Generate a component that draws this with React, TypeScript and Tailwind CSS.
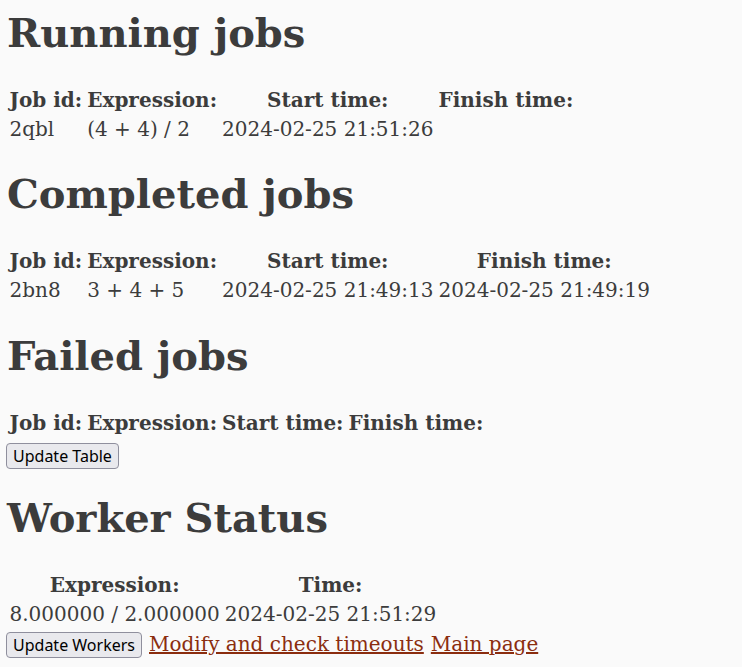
const running = [{ id: "2qbl", expr: "(4 + 4) / 2", start: "2024-02-25 21:51:26", finish: "" }];
const completed = [{ id: "2bn8", expr: "3 + 4 + 5", start: "2024-02-25 21:49:13", finish: "2024-02-25 21:49:19" }];
const workers = [{ expr: "8.000000 / 2.000000", time: "2024-02-25 21:51:29" }];

type Job = { id: string; expr: string; start: string; finish: string };

const th = "px-[1.5px] py-[1px] text-center font-bold";
const td = "px-[1.5px] py-[1px] text-left font-normal";
const btn =
  "h-[26px] rounded-[4px] border border-[#8f8f9d] bg-[#e9e9ed] px-[6px] text-[16px] leading-none text-black font-['Noto_Sans','DejaVu_Sans',sans-serif]";
const link = "text-[#8b2d0f] underline";

function Heading({ children, className = "mt-[26.8px]" }: { children: React.ReactNode; className?: string }) {
  return <h1 className={`${className} mb-[28.5px] pl-px text-[40px] font-bold leading-[46.5px]`}>{children}</h1>;
}

function JobsTable({ rows }: { rows: Job[] }) {
  return (
    <table className="border-separate border-spacing-[2px] leading-[25px]">
      <thead>
        <tr>
          <th className={th}>Job id:</th>
          <th className={th}>Expression:</th>
          <th className={th}>Start time:</th>
          <th className={th}>Finish time:</th>
        </tr>
      </thead>
      <tbody>
        {rows.map((r) => (
          <tr key={r.id}>
            <td className={td}>{r.id}</td>
            <td className={td}>{r.expr}</td>
            <td className={td}>{r.start}</td>
            <td className={td}>{r.finish}</td>
          </tr>
        ))}
      </tbody>
    </table>
  );
}

export default function App() {
  return (
    <div className="flow-root min-h-screen bg-[#fafafa] px-[6px] pb-4 text-[20px] text-[#3c3c3c] font-['DejaVu_Serif',serif]">
      <Heading className="mt-[9.6px]">Running jobs</Heading>
      <JobsTable rows={running} />

      <Heading>Completed jobs</Heading>
      <JobsTable rows={completed} />

      <Heading>Failed jobs</Heading>
      <JobsTable rows={[]} />
      <div className="mt-[3.5px] flex">
        <button className={btn}>Update Table</button>
      </div>

      <Heading>Worker Status</Heading>
      <table className="border-separate border-spacing-[2px] leading-[25px]">
        <thead>
          <tr>
            <th className={th}>Expression:</th>
            <th className={th}>Time:</th>
          </tr>
        </thead>
        <tbody>
          {workers.map((w) => (
            <tr key={w.time}>
              <td className={td}>{w.expr}</td>
              <td className={td}>{w.time}</td>
            </tr>
          ))}
        </tbody>
      </table>
      <div className="-mt-px flex items-baseline gap-[7px]">
        <button className={btn}>Update Workers</button>
        <a href="#" className={link}>
          Modify and check timeouts
        </a>
        <a href="#" className={link}>
          Main page
        </a>
      </div>
    </div>
  );
}
